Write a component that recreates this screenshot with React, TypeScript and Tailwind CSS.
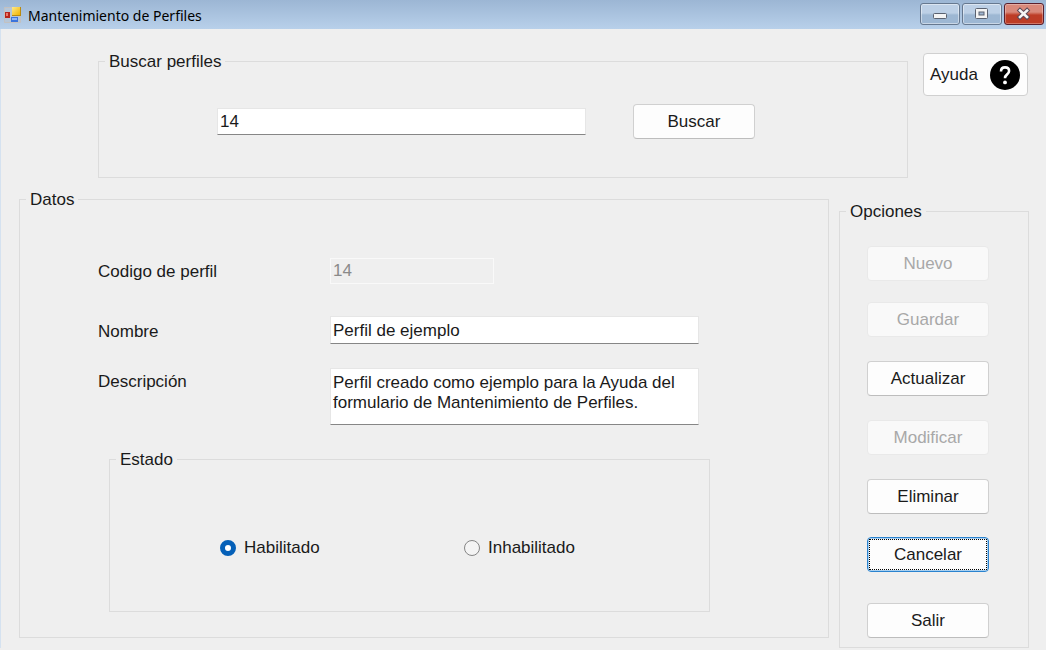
import { useState, type ButtonHTMLAttributes, type ReactNode } from "react";

const BORDER = "border border-[#dcdcdc]";

function Group({ title, className, children }: { title: string; className: string; children: ReactNode }) {
  return (
    <fieldset className={`min-w-0 ${BORDER} ${className}`}>
      <legend className="ml-1.5 px-1 pt-px leading-5">{title}</legend>
      {children}
    </fieldset>
  );
}

interface ButtonProps extends ButtonHTMLAttributes<HTMLButtonElement> {
  active?: boolean;
}

function Button({ className = "", active = false, children, ...rest }: ButtonProps) {
  const look = active
    ? "border-[#2a83cf] p-px ring-1 ring-[#a9d0f0] ring-inset"
    : "border-[#d0d0d0] border-b-[#bdbdbd] disabled:border-[#e9e9e9]";
  return (
    <button
      type="button"
      className={`h-[35px] w-[122px] shrink-0 rounded-[4px] border bg-[#fdfdfd] disabled:bg-[#f9f9f9] disabled:text-[#a8a8a8] ${look} ${className}`}
      {...rest}
    >
      {active ? (
        <span className="flex h-full items-center justify-center border border-dotted border-black">{children}</span>
      ) : (
        children
      )}
    </button>
  );
}

function FormIcon() {
  return (
    <svg width="18" height="18" viewBox="0 0 18 18" aria-hidden="true">
      <defs>
        <linearGradient id="gold" x1="0" y1="0" x2="1" y2="1">
          <stop offset="0" stopColor="#ffe98a" />
          <stop offset="1" stopColor="#f0b400" />
        </linearGradient>
      </defs>
      <path d="M.5 1.5h16v15h-16z" fill="#b6c6d8" stroke="#c3c1c0" />
      <rect x="1" y="6" width="5" height="6" fill="#b8251c" />
      <rect x="2" y="7" width="2" height="3" fill="#ea7a6c" />
      <rect x="8" y="1" width="9" height="9" fill="#b98a10" />
      <rect x="8" y="1" width="8" height="8" fill="url(#gold)" />
      <rect x="7" y="11" width="7" height="5" fill="#3b74dc" />
      <rect x="8" y="12" width="5" height="2" fill="#8fb6f6" />
    </svg>
  );
}

function HelpIcon() {
  return (
    <svg width="30" height="30" viewBox="0 0 30 30" aria-hidden="true">
      <circle cx="15" cy="15" r="15" fill="#000" />
      <path
        d="M11 11.4C11 8.9 12.7 7.4 15 7.4c2.4 0 4.1 1.5 4.1 3.7 0 1.7-1 2.6-2.2 3.5-1.3 1-1.9 1.7-1.9 3.6"
        fill="none"
        stroke="#fff"
        strokeWidth="2.6"
      />
      <circle cx="15" cy="22.4" r="1.9" fill="#fff" />
    </svg>
  );
}

const CAPTION =
  "flex h-[22px] w-10 items-center justify-center rounded-[3px] border border-[#66788f] bg-linear-to-b from-[#bdd0e6] from-45% to-[#9db7d3] to-55% shadow-[inset_0_0_0_1px_rgba(255,255,255,0.45)]";

function TitleBar() {
  return (
    <header className="flex h-[29px] items-start bg-linear-to-b from-[#9cb6d4] to-[#b8d0ea] pr-0.5 pl-1">
      <div className="flex h-full flex-1 items-center gap-1.5">
        <FormIcon />
        <h1 className="pt-0.5 font-['Noto_Sans',sans-serif] text-[14px] leading-5 text-black">Mantenimiento de Perfiles</h1>
      </div>
      <div className="flex gap-0.5 pt-[3px]">
        <button type="button" aria-label="Minimizar" className={CAPTION}>
          <svg width="16" height="14" viewBox="0 0 16 14">
            <rect x="1.5" y="6.5" width="13" height="5" rx="1" fill="#f4f4f4" stroke="#5b6270" />
          </svg>
        </button>
        <button type="button" aria-label="Maximizar" className={CAPTION}>
          <svg width="16" height="14" viewBox="0 0 16 14">
            <rect x="1.5" y="1.5" width="12" height="10" rx="1" fill="#f4f4f4" stroke="#5b6270" />
            <rect x="5" y="5" width="5" height="3" fill="#9fb5d0" stroke="#5b6270" />
          </svg>
        </button>
        <button
          type="button"
          aria-label="Cerrar"
          className="flex h-[22px] w-10 items-center justify-center rounded-[3px] border border-[#5a1f2c] bg-linear-to-b from-[#d9897b] from-40% to-[#bd3c26] to-55% shadow-[inset_0_0_0_1px_rgba(255,255,255,0.3)]"
        >
          <svg width="16" height="14" viewBox="0 0 16 14" fill="none" strokeLinecap="square">
            <path d="M4 3.5l7 6.5M11 3.5l-7 6.5" stroke="#5b4a58" strokeWidth="4.6" />
            <path d="M4 3.5l7 6.5M11 3.5l-7 6.5" stroke="#f6f6f6" strokeWidth="2.6" />
          </svg>
        </button>
      </div>
    </header>
  );
}

const FIELD = "border border-[#e6e6e6] border-b-[#868686] bg-white px-0.5 outline-none";
const RADIO =
  "size-4 appearance-none rounded-full border border-[#858585] bg-[#f4f4f4] checked:border-[5px] checked:border-[#0560b8] checked:bg-white";

const OPTIONS = [
  { label: "Nuevo", disabled: true, active: false, className: "" },
  { label: "Guardar", disabled: true, active: false, className: "mt-[21px]" },
  { label: "Actualizar", disabled: false, active: false, className: "mt-6" },
  { label: "Modificar", disabled: true, active: false, className: "mt-6" },
  { label: "Eliminar", disabled: false, active: false, className: "mt-6" },
  { label: "Cancelar", disabled: false, active: true, className: "mt-[23px]" },
  { label: "Salir", disabled: false, active: false, className: "mt-[31px]" },
];

export default function App() {
  const [search, setSearch] = useState("14");
  const [name, setName] = useState("Perfil de ejemplo");
  const [description, setDescription] = useState(
    "Perfil creado como ejemplo para la Ayuda del formulario de Mantenimiento de Perfiles.",
  );
  const [enabled, setEnabled] = useState(true);

  return (
    <div className="min-h-screen bg-[#efefef] font-['Liberation_Sans',Arial,sans-serif] text-[17px] leading-5 text-[#1a1a1a]">
      <TitleBar />
      <main className="border-l border-[#d5e2f0] pt-[22px]">
        <div className="flex items-start gap-[15px] pr-[18px] pl-[97px]">
          <Group title="Buscar perfiles" className="flex-1">
            <div className="flex items-center gap-[47px] pt-8 pb-[38px] pl-[118px]">
              <input
                aria-label="Buscar perfiles"
                value={search}
                onChange={(e) => setSearch(e.target.value)}
                className={`h-[27px] w-[369px] min-w-0 ${FIELD}`}
              />
              <Button>Buscar</Button>
            </div>
          </Group>
          <button
            type="button"
            className="mt-0.5 flex h-[43px] w-[105px] items-center justify-between rounded-[4px] border border-[#d0d0d0] bg-[#fdfdfd] pr-[7px] pl-1.5"
          >
            Ayuda
            <HelpIcon />
          </button>
        </div>

        <div className="mt-[11px] flex items-start gap-2.5 pr-[17px] pl-[18px]">
          <Group title="Datos" className="flex-1 pb-[25px]">
            <div className="flex flex-col gap-6 pt-12 pl-[78px]">
              <div className="mb-2 flex items-center">
                <label htmlFor="codigo" className="w-[232px] pt-0.5">Codigo de perfil</label>
                <input
                  id="codigo"
                  value="14"
                  disabled
                  readOnly
                  className="h-[26px] w-[164px] border border-[#f9f9f9] bg-[#efefef] px-0.5 text-[#8a8a8a]"
                />
              </div>
              <div className="flex items-center">
                <label htmlFor="nombre" className="w-[232px] pt-1">Nombre</label>
                <input
                  id="nombre"
                  value={name}
                  onChange={(e) => setName(e.target.value)}
                  className={`h-7 w-[369px] pt-0.5 ${FIELD}`}
                />
              </div>
              <div className="flex items-start">
                <label htmlFor="descripcion" className="w-[232px] pt-1">Descripción</label>
                <textarea
                  id="descripcion"
                  value={description}
                  onChange={(e) => setDescription(e.target.value)}
                  className={`h-[57px] w-[369px] resize-none overflow-hidden pt-1 ${FIELD}`}
                />
              </div>
            </div>
            <Group title="Estado" className="mt-6 ml-[89px] w-[601px] max-w-full">
              <div className="grid grid-cols-[244px_auto] pt-[68px] pb-[53px] pl-[110px]">
                <label className="flex items-center gap-2">
                  <input type="radio" name="estado" checked={enabled} onChange={() => setEnabled(true)} className={RADIO} />
                  Habilitado
                </label>
                <label className="flex items-center gap-2">
                  <input type="radio" name="estado" checked={!enabled} onChange={() => setEnabled(false)} className={RADIO} />
                  Inhabilitado
                </label>
              </div>
            </Group>
          </Group>

          <Group title="Opciones" className="mt-3 w-[190px] shrink-0">
            <div className="flex flex-col items-start pt-6 pb-[9px] pl-[27px]">
              {OPTIONS.map((o) => (
                <Button key={o.label} disabled={o.disabled} active={o.active} className={o.className}>
                  {o.label}
                </Button>
              ))}
            </div>
          </Group>
        </div>
      </main>
    </div>
  );
}
